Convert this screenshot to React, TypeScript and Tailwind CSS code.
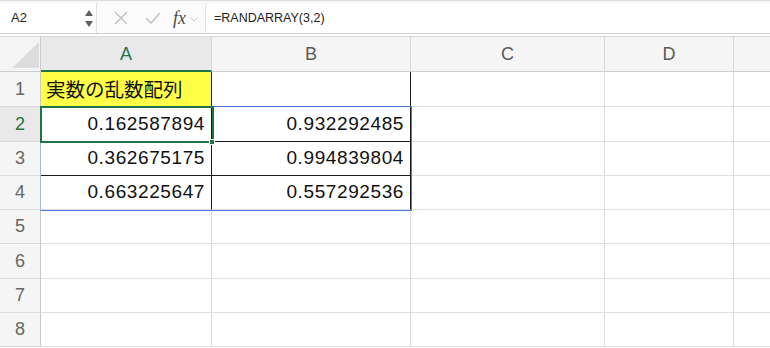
const cols = [
  { key: "A", w: "w-[171px]" },
  { key: "B", w: "w-[199px]" },
  { key: "C", w: "w-[194px]" },
  { key: "D", w: "w-[129px]" },
];

const rowHeights = ["h-[35px]", "h-[35px]", "h-[34px]", "h-[34px]", "h-[34px]", "h-[35px]", "h-[34px]", "h-[34px]"];

const values: Record<number, [string, string]> = {
  2: ["0.162587894", "0.932292485"],
  3: ["0.362675175", "0.994839804"],
  4: ["0.663225647", "0.557292536"],
};

function FormulaBar() {
  return (
    <div className="flex h-[33px] items-stretch border-t border-[#dedede] bg-[#f7f7f7] pt-[2px] font-['Liberation_Sans',sans-serif]">
      {/* name box */}
      <div className="flex w-[97px] items-center justify-between border-r border-[#e0e0e0] bg-white pl-[11px] pr-[3px]">
        <span className="text-[13px] text-[#222]">A2</span>
        <div className="flex flex-col items-center gap-[5px]">
          <svg width="8" height="6" viewBox="0 0 8 6"><path d="M4 0 L8 6 L0 6 Z" fill="#5f5f5f" /></svg>
          <svg width="8" height="6" viewBox="0 0 8 6"><path d="M0 0 L8 0 L4 6 Z" fill="#5f5f5f" /></svg>
        </div>
      </div>
      {/* actions */}
      <div className="flex w-[108px] items-center bg-[#fbfbfb]">
        <svg className="ml-[17px]" width="14" height="14" viewBox="0 0 14 14">
          <path d="M1.5 1.5 L12.5 12.5 M12.5 1.5 L1.5 12.5" stroke="#c4c4c4" strokeWidth="1.6" strokeLinecap="round" />
        </svg>
        <svg className="ml-[17px]" width="16" height="13" viewBox="0 0 16 13">
          <path d="M1.5 6.5 L6 11 L14.5 1.5" stroke="#c4c4c4" strokeWidth="1.6" fill="none" strokeLinecap="round" strokeLinejoin="round" />
        </svg>
        <span className="ml-[12px] font-['Liberation_Serif',serif] text-[18px] italic leading-none text-[#4a4a4a]">fx</span>
        <svg className="ml-[4px] mt-[2px]" width="8" height="5" viewBox="0 0 8 5">
          <path d="M0.5 0.5 L4 4 L7.5 0.5" stroke="#c8c8c8" strokeWidth="1" fill="none" />
        </svg>
      </div>
      {/* input */}
      <div className="flex flex-1 items-center rounded-l-[3px] border-l border-[#e2e2e2] bg-white pl-[8px]">
        <span className="text-[12.5px] text-[#222]">=RANDARRAY(3,2)</span>
      </div>
    </div>
  );
}

function ColumnHeaders() {
  return (
    <div className="flex h-[39px] border-t border-[#cfcfcf] pt-[2px] font-['Liberation_Sans',sans-serif]">
      <div className="flex h-full w-full border-t border-[#d6d6d6] bg-[#f5f5f5]">
        <div className="relative w-[41px] shrink-0 border-r border-b border-[#cdcdcd]">
          <svg className="absolute right-[1px] bottom-[3px]" width="27" height="26" viewBox="0 0 27 26">
            <path d="M27 0 L27 26 L0 26 Z" fill="#dcdcdc" />
          </svg>
        </div>
        {cols.map((c) => (
          <div
            key={c.key}
            className={
              c.key === "A"
                ? `${c.w} flex shrink-0 items-center justify-center border-r border-b-2 border-r-[#d8d8d8] border-b-[#217346] bg-[#e9e9e9] pt-[1px] text-[18px] text-[#217346]`
                : `${c.w} flex shrink-0 items-center justify-center border-r border-b border-r-[#d8d8d8] border-b-[#cdcdcd] pt-[1px] text-[18px] text-[#5a5a5a]`
            }
          >
            {c.key}
          </div>
        ))}
        <div className="flex-1 border-b border-[#cdcdcd]" />
      </div>
    </div>
  );
}

function Row({ r }: { r: number }) {
  const v = values[r];
  const inTable = r <= 4;
  const aClass = [
    "flex shrink-0 items-center justify-end border-r border-b pr-[6px] w-[171px]",
    inTable ? "border-r-[#1a1a1a]" : "border-r-[#d9d9d9]",
    r === 2 || r === 3 ? "border-b-[#1a1a1a]" : "border-b-[#dedede]",
    r === 1 ? "justify-start bg-[#ffff47] pl-[5px]" : "bg-white",
  ].join(" ");
  const bClass = [
    "flex shrink-0 items-center justify-end border-r border-b pr-[6px] w-[199px] bg-white",
    inTable ? "border-r-[#1a1a1a]" : "border-r-[#d9d9d9]",
    r === 2 || r === 3 ? "border-b-[#1a1a1a]" : "border-b-[#dedede]",
  ].join(" ");
  const num = "font-['Liberation_Sans',sans-serif] text-[19px] tracking-[0.6px] text-[#111]";
  return (
    <div className={`flex ${rowHeights[r - 1]}`}>
      <div
        className={
          r === 2
            ? "flex w-[41px] shrink-0 items-center justify-center border-r border-b border-r-[#c9c9c9] border-b-[#dcdcdc] bg-[#e9e9e9] font-['Liberation_Sans',sans-serif] text-[18px] text-[#217346]"
            : "flex w-[41px] shrink-0 items-center justify-center border-r border-b border-r-[#c9c9c9] border-b-[#dcdcdc] bg-[#f5f5f5] font-['Liberation_Sans',sans-serif] text-[18px] text-[#666]"
        }
      >
        {r}
      </div>
      <div className={aClass}>
        {r === 1 ? (
          <span className="text-[19.5px] text-[#111]">実数の乱数配列</span>
        ) : v ? (
          <span className={num}>{v[0]}</span>
        ) : null}
      </div>
      <div className={bClass}>{v ? <span className={num}>{v[1]}</span> : null}</div>
      <div className="w-[194px] shrink-0 border-r border-b border-[#dedede] bg-white" />
      <div className="w-[129px] shrink-0 border-r border-b border-[#dedede] bg-white" />
      <div className="flex-1 border-b border-[#dedede] bg-white" />
    </div>
  );
}

export default function App() {
  return (
    <div className="h-[348px] w-[770px] overflow-hidden bg-white font-['Noto_Sans_CJK_JP','Liberation_Sans',sans-serif]">
      <FormulaBar />
      <ColumnHeaders />
      <div className="relative">
        {[1, 2, 3, 4, 5, 6, 7, 8].map((r) => (
          <Row key={r} r={r} />
        ))}
        {/* spill range */}
        <div className="pointer-events-none absolute left-[40px] top-[34px] h-[105px] w-[372px] border border-[#4a7bd6] border-l-[#a9b9d8]" />
        {/* active cell */}
        <div className="pointer-events-none absolute left-[40px] top-[34px] h-[37px] w-[174px] border-2 border-[#217346]" />
        <div className="pointer-events-none absolute left-[209px] top-[67px] h-[6px] w-[6px] border border-white bg-[#217346]" />
      </div>
    </div>
  );
}
